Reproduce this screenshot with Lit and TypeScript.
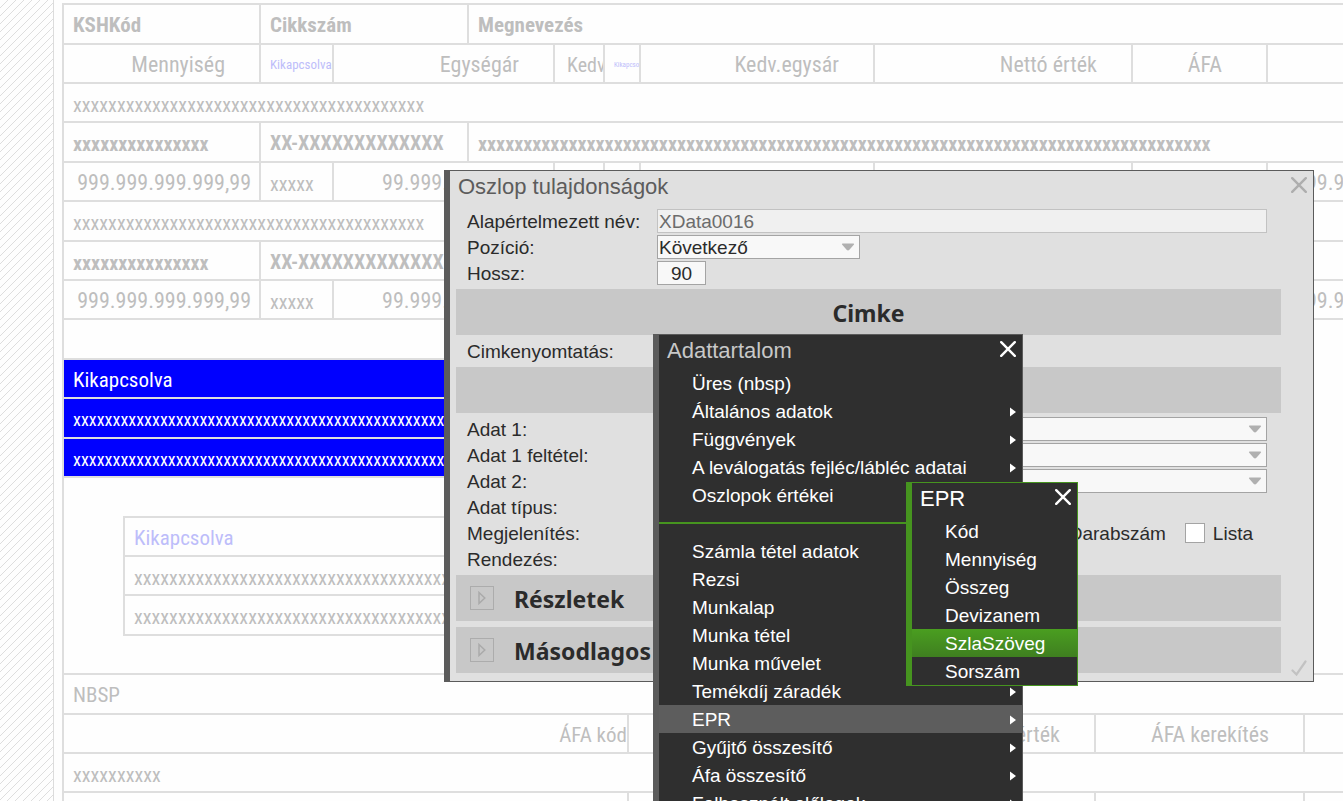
import { LitElement, html, css, svg, nothing } from "lit";
import { customElement, property } from "lit/decorators.js";
import { classMap } from "lit/directives/class-map.js";

interface Cell {
  text?: string;
  span?: number;
  kind?: string;
}

interface MenuEntry {
  label?: string;
  sub?: boolean;
  active?: boolean;
}

const x = (count: number) => "x".repeat(count);

const closeIcon = svg`<svg viewBox="0 0 16 16" width="16" height="16" aria-hidden="true">
  <path d="M1.2 1.2 L14.8 14.8 M14.8 1.2 L1.2 14.8" fill="none" stroke="currentColor" stroke-width="2.4" stroke-linecap="round"/>
</svg>`;

@customElement("report-canvas")
export class ReportCanvas extends LitElement {
  static styles = css`
    :host {
      display: flex;
      height: 100%;
      font-family: "Roboto Condensed", Roboto, "Liberation Sans", sans-serif;
      font-size: 21px;
      line-height: 24px;
      color: #bebebe;
    }
    .gutter {
      flex: none;
      box-sizing: border-box;
      width: 54px;
      margin-right: 8px;
      border-right: 1px solid #dcdcdc;
      background: linear-gradient(135deg, transparent 44%, #dedede 45%, #dedede 54%, transparent 55%) 0 0 / 8px 8px;
    }
    .report {
      flex: 1;
      min-width: 0;
      margin-top: 3px;
      border-left: 2px solid #dedede;
      border-top: 2px solid #dedede;
      overflow: hidden;
    }
    table {
      width: 100%;
      table-layout: fixed;
      border-spacing: 0;
    }
    td {
      box-sizing: border-box;
      height: 39px;
      padding: 2px 8px 0 9px;
      border-bottom: 2px solid #dedede;
      border-right: 2px solid #dedede;
      overflow: hidden;
      white-space: nowrap;
    }
    td:last-child {
      border-right: 0;
    }
    .tall td {
      height: 40px;
    }
    .bold {
      font-weight: bold;
    }
    .x {
      padding-top: 4px;
      font-size: 20px;
    }
    .code {
      font-size: 20px;
    }
    .num,
    .head {
      text-align: right;
      font-size: 22px;
    }
    .head {
      padding-right: 34px;
    }
    .wide {
      padding-right: 44px;
    }
    .start {
      padding-left: 12px;
      padding-right: 0;
      font-size: 20px;
    }
    .late {
      padding-left: 38px;
      font-size: 22px;
    }
    .cut {
      text-align: right;
      padding-right: 0;
    }
    .off {
      color: #bdbdfa;
    }
    .small {
      font-size: 13px;
      padding-right: 0;
    }
    .tiny {
      font-size: 7px;
      padding-right: 0;
    }
    .selected td {
      background: #0000ff;
      color: #ffffff;
    }
    .selected .x {
      font-size: 18px;
    }
    td.void {
      background: none;
      border: 0;
    }
    .indented {
      margin-left: 59px;
      margin-right: 210px;
      border-left: 2px solid #dedede;
      border-top: 2px solid #dedede;
    }
    .spacer {
      height: 38px;
    }
    .lower {
      height: 37px;
      border-bottom: 2px solid #dedede;
    }
    .c36 { width: 36px; }
    .c50 { width: 50px; }
    .c73 { width: 73px; }
    .c86 { width: 86px; }
    .c135 { width: 135px; }
    .c197 { width: 197px; }
    .c209 { width: 209px; }
    .c234 { width: 234px; }
    .c258 { width: 258px; }
    .c467 { width: 467px; }
    .c565 { width: 565px; }
  `;

  private row(cells: Cell[], rowClass = "") {
    return html`<tr class=${rowClass}>
      ${cells.map((c) => html`<td class=${c.kind ?? ""} colspan=${c.span ?? 1}>${c.text ?? nothing}</td>`)}
    </tr>`;
  }

  render() {
    const full = (text: string, kind = ""): Cell[] => [{ text, span: 10, kind }];
    const partial = (text: string, kind = ""): Cell[] => [
      { text, span: 8, kind },
      { span: 2, kind: "void" },
    ];
    const heading: Cell[] = [
      { text: x(15), kind: "bold x" },
      { text: "XX-XXXXXXXXXXXXX", span: 2, kind: "bold code" },
      { text: x(81), span: 7, kind: "bold x" },
    ];
    const amounts: Cell[] = [
      { text: "999.999.999.999,99", kind: "num" },
      { text: x(5), kind: "x" },
      { text: "99.999.999.999,99", span: 2, kind: "num" },
      {},
      {},
      {},
      {},
      {},
      { text: "99.999", kind: "late" },
    ];
    return html`
      <div class="gutter"></div>
      <div class="report">
        <table>
          <colgroup>
            <col class="c197" /><col class="c73" /><col class="c135" /><col class="c86" /><col class="c50" />
            <col class="c36" /><col class="c234" /><col class="c258" /><col class="c135" /><col />
          </colgroup>
          <tbody>
            ${this.row(
              [
                { text: "KSHKód", kind: "bold" },
                { text: "Cikkszám", span: 2, kind: "bold" },
                { text: "Megnevezés", span: 7, kind: "bold" },
              ],
              "tall",
            )}
            ${this.row([
              { text: "Mennyiség", kind: "head" },
              { text: "Kikapcsolva", kind: "off small" },
              { text: "Egységár", span: 2, kind: "head" },
              { text: "Kedv", kind: "start" },
              { text: "Kikapcsolva", kind: "off tiny" },
              { text: "Kedv.egysár", kind: "head" },
              { text: "Nettó érték", kind: "head" },
              { text: "ÁFA", kind: "head wide" },
              {},
            ])}
            ${this.row(full(x(40), "x"))} ${this.row(heading, "tall")} ${this.row(amounts)}
            ${this.row(full(x(40), "x"), "tall")} ${this.row(heading)} ${this.row(amounts)}
            ${this.row(partial(""), "tall")} ${this.row(partial("Kikapcsolva"), "selected")}
            ${this.row(partial(x(60), "x"), "selected tall")} ${this.row(partial(x(60), "x"), "selected")}
          </tbody>
        </table>
        <div class="spacer"></div>
        <div class="indented">
          <table>
            <tbody>
              ${this.row([{ text: "Kikapcsolva", kind: "off" }])} ${this.row([{ text: x(50), kind: "x" }])}
              ${this.row([{ text: x(50), kind: "x" }], "tall")}
            </tbody>
          </table>
        </div>
        <div class="lower"></div>
        <table>
          <colgroup>
            <col class="c565" /><col class="c467" /><col class="c209" /><col />
          </colgroup>
          <tbody>
            ${this.row([{ text: "NBSP", span: 4 }], "tall")}
            ${this.row([
              { text: "ÁFA kód", kind: "cut" },
              { text: "Áfa érték", kind: "head" },
              { text: "ÁFA kerekítés", kind: "head" },
              {},
            ])}
            ${this.row([{ text: x(10), span: 4, kind: "x" }])} ${this.row([{}, {}, {}, {}])}
          </tbody>
        </table>
      </div>
    `;
  }
}

@customElement("popup-menu")
export class PopupMenu extends LitElement {
  @property() heading = "";
  @property({ attribute: false }) entries: MenuEntry[] = [];
  @property({ type: Boolean, reflect: true }) accent = false;

  static styles = css`
    :host {
      display: block;
      box-sizing: border-box;
      border: 1px solid #5b5b5b;
      border-left-width: 6px;
      background: #2f2f2f;
      color: #ffffff;
      font-family: "Liberation Sans", Arial, sans-serif;
      font-size: 19px;
      line-height: 26px;
    }
    :host([accent]) {
      border-color: #46941f;
    }
    header {
      display: flex;
      justify-content: space-between;
      height: 34px;
      padding: 0 6px 0 8px;
    }
    h2 {
      margin: 0;
      font-size: 22px;
      font-weight: normal;
      line-height: 32px;
      color: #c8c8c8;
    }
    :host([accent]) h2 {
      color: #ffffff;
    }
    button {
      border: 0;
      padding: 0;
      background: none;
      color: inherit;
      font: inherit;
      text-align: left;
      cursor: pointer;
    }
    .close {
      display: flex;
      align-items: center;
      height: 28px;
    }
    ul {
      margin: 0;
      padding: 0;
      list-style: none;
    }
    .entry {
      box-sizing: border-box;
      display: flex;
      align-items: center;
      justify-content: space-between;
      width: 100%;
      height: 28px;
      padding: 2px 6px 0 33px;
      white-space: nowrap;
    }
    .active {
      background: #5d5d5d;
    }
    :host([accent]) .active {
      background: linear-gradient(#4a9e20, #3f7f20);
    }
    .rule {
      height: 13px;
      margin-bottom: 13px;
      border-bottom: 2px solid #46941f;
    }
  `;

  render() {
    return html`
      <header>
        <h2>${this.heading}</h2>
        <button class="close" aria-label="Bezárás">${closeIcon}</button>
      </header>
      <ul>
        ${this.entries.map((e) =>
          e.label
            ? html`<li>
                <button class=${classMap({ entry: true, active: !!e.active })}>
                  <span>${e.label}</span>
                  ${e.sub
                    ? html`<svg viewBox="0 0 6 10" width="6" height="10" aria-hidden="true"><path d="M0 0.5 L6 5 L0 9.5 Z" fill="#fff" /></svg>`
                    : nothing}
                </button>
              </li>`
            : html`<li class="rule" role="separator"></li>`,
        )}
      </ul>
    `;
  }
}

@customElement("column-dialog")
export class ColumnDialog extends LitElement {
  static styles = css`
    :host {
      display: flex;
      flex-direction: column;
      box-sizing: border-box;
      border: 1px solid #5b5b5b;
      border-left-width: 6px;
      background: #e0e0e0;
      color: #2b2b2b;
      font-family: "Liberation Sans", Arial, sans-serif;
      font-size: 19px;
      line-height: 24px;
    }
    header {
      display: flex;
      justify-content: space-between;
      height: 37px;
      padding: 0 6px 0 8px;
      color: #5c5c5c;
    }
    h1 {
      margin: 0;
      font-size: 22px;
      font-weight: normal;
      line-height: 32px;
    }
    button {
      display: flex;
      align-items: center;
      justify-content: center;
      border: 0;
      padding: 0;
      background: none;
      color: #aeaeae;
      cursor: pointer;
    }
    .close {
      height: 28px;
    }
    .content {
      display: flex;
      align-items: flex-end;
      justify-content: space-between;
      padding: 0 6px;
    }
    .form {
      display: flex;
      flex-direction: column;
      flex: 1;
      margin-right: 10px;
      padding-bottom: 5px;
    }
    .row {
      display: grid;
      grid-template-columns: 190px 1fr;
      align-items: center;
      height: 26px;
      padding: 0 14px 0 11px;
    }
    .row label,
    .row > span {
      padding-top: 2px;
    }
    input,
    select {
      box-sizing: border-box;
      height: 24px;
      margin: 0;
      padding: 1px 1px 0;
      border: 1px solid #a4a4a4;
      border-radius: 0;
      background: #f8f8f8;
      color: #2b2b2b;
      font: inherit;
      line-height: 21px;
      appearance: none;
    }
    input:disabled {
      border-color: #c2c2c2;
      background: #f0f0f0;
      color: #6c6c6c;
    }
    .length {
      width: 49px;
      text-align: center;
    }
    .pick {
      display: grid;
      align-items: center;
    }
    .pick > * {
      grid-area: 1 / 1;
    }
    .pick svg {
      justify-self: end;
      margin-right: 5px;
      pointer-events: none;
    }
    .short {
      width: 203px;
    }
    .checks {
      display: flex;
      justify-content: flex-end;
      gap: 19px;
      padding-right: 14px;
    }
    .row .check {
      display: flex;
      align-items: center;
      gap: 8px;
      padding: 0;
    }
    .check span {
      padding-top: 2px;
    }
    .check input {
      width: 20px;
      height: 20px;
      background: #ffffff;
    }
    .band {
      display: flex;
      align-items: center;
      justify-content: center;
      height: 46px;
      margin: 3px 0;
      background: #c8c8c8;
    }
    h2 {
      margin: 0;
      padding-top: 2px;
      font-family: "Noto Sans", "Open Sans", sans-serif;
      font-size: 23px;
      line-height: 32px;
    }
    .fold {
      box-sizing: border-box;
      justify-content: flex-start;
      gap: 20px;
      padding-left: 14px;
    }
    .fold button {
      box-sizing: border-box;
      width: 24px;
      height: 24px;
      border: 1px solid #acacac;
    }
    .ok {
      margin-bottom: 5px;
      color: #c2c2c2;
    }
  `;

  private picker(id: string, label: string, value = "", short = false) {
    return html`<div class="row">
      <label for=${id}>${label}</label>
      <div class=${classMap({ pick: true, short })}>
        <select id=${id}>
          <option>${value}</option>
        </select>
        <svg viewBox="0 0 14 8" width="14" height="8" aria-hidden="true">
          <path d="M1.5 0.5 H12.5 Q13.6 0.8 12.8 1.8 L8.4 6.8 Q7 8 5.6 6.8 L1.2 1.8 Q0.4 0.8 1.5 0.5 Z" fill="#b0b0b0" />
        </svg>
      </div>
    </div>`;
  }

  private fold(title: string) {
    return html`<section class="band fold">
      <button aria-label=${title}>
        <svg viewBox="0 0 8 14" width="8" height="14" aria-hidden="true">
          <path d="M1 1.5 L6.8 7 L1 12.5 Z" fill="none" stroke="#aaaaaa" stroke-width="1.5" />
        </svg>
      </button>
      <h2>${title}</h2>
    </section>`;
  }

  render() {
    return html`
      <header>
        <h1>Oszlop tulajdonságok</h1>
        <button class="close" aria-label="Bezárás">${closeIcon}</button>
      </header>
      <div class="content">
        <div class="form">
          <div class="row">
            <label for="name">Alapértelmezett név:</label>
            <input id="name" disabled value="XData0016" />
          </div>
          ${this.picker("position", "Pozíció:", "Következő", true)}
          <div class="row">
            <label for="length">Hossz:</label>
            <input id="length" class="length" value="90" />
          </div>
          <div class="band"><h2>Cimke</h2></div>
          <div class="row"><span>Cimkenyomtatás:</span></div>
          <div class="band"></div>
          ${this.picker("data1", "Adat 1:")} ${this.picker("filter1", "Adat 1 feltétel:")}
          ${this.picker("data2", "Adat 2:")}
          <div class="row"><span>Adat típus:</span></div>
          <div class="row">
            <span>Megjelenítés:</span>
            <div class="checks">
              <label class="check"><input type="checkbox" /><span>Darabszám</span></label>
              <label class="check"><input type="checkbox" /><span>Lista</span></label>
            </div>
          </div>
          <div class="row"><span>Rendezés:</span></div>
          ${this.fold("Részletek")} ${this.fold("Másodlagos")}
        </div>
        <button class="ok" aria-label="Rendben">
          <svg viewBox="0 0 16 16" width="16" height="16" aria-hidden="true">
            <path d="M1.5 10.5 L5.5 14.5 L14.5 1.5" fill="none" stroke="currentColor" stroke-width="2.2" stroke-linecap="round" />
          </svg>
        </button>
      </div>
    `;
  }
}

@customElement("app-root")
export class AppRoot extends LitElement {
  static styles = css`
    :host {
      display: block;
      position: relative;
      height: 100vh;
      overflow: hidden;
      background: #fefefe;
    }
    column-dialog {
      position: absolute;
      top: 170px;
      left: 444px;
      right: 29px;
    }
    .main {
      position: absolute;
      top: 334px;
      left: 653px;
      width: 370px;
    }
    .flyout {
      position: absolute;
      top: 482px;
      left: 906px;
      width: 172px;
    }
  `;

  private mainEntries: MenuEntry[] = [
    { label: "Üres (nbsp)" },
    { label: "Általános adatok", sub: true },
    { label: "Függvények", sub: true },
    { label: "A leválogatás fejléc/lábléc adatai", sub: true },
    { label: "Oszlopok értékei" },
    {},
    { label: "Számla tétel adatok" },
    { label: "Rezsi" },
    { label: "Munkalap" },
    { label: "Munka tétel" },
    { label: "Munka művelet" },
    { label: "Temékdíj záradék", sub: true },
    { label: "EPR", sub: true, active: true },
    { label: "Gyűjtő összesítő", sub: true },
    { label: "Áfa összesítő", sub: true },
    { label: "Felhasznált előlegek", sub: true },
  ];

  private eprEntries: MenuEntry[] = [
    { label: "Kód" },
    { label: "Mennyiség" },
    { label: "Összeg" },
    { label: "Devizanem" },
    { label: "SzlaSzöveg", active: true },
    { label: "Sorszám" },
  ];

  render() {
    return html`
      <report-canvas></report-canvas>
      <column-dialog></column-dialog>
      <popup-menu class="main" heading="Adattartalom" .entries=${this.mainEntries}></popup-menu>
      <popup-menu class="flyout" accent heading="EPR" .entries=${this.eprEntries}></popup-menu>
    `;
  }
}
